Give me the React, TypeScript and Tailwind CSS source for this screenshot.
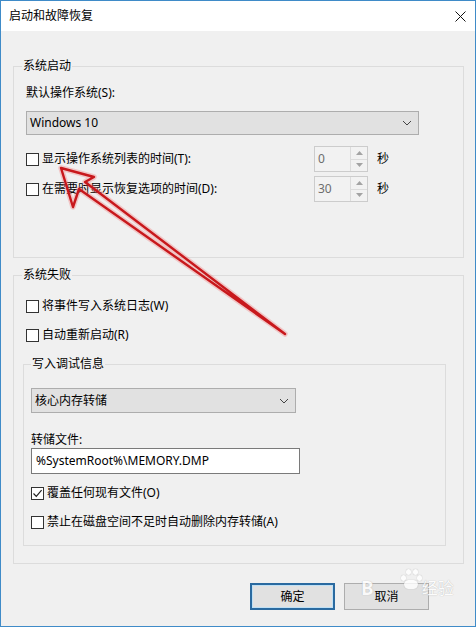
import React from "react";

function CheckBox({ checked = false }: { checked?: boolean }) {
  return (
    <span className="flex h-[13px] w-[13px] shrink-0 items-center justify-center border border-[#333333] bg-white">
      {checked && (
        <svg width="11" height="11" viewBox="0 0 11 11">
          <path d="M1.5 5.5 L4.3 8.3 L9.6 2.2" fill="none" stroke="#222" strokeWidth="1.2" />
        </svg>
      )}
    </span>
  );
}

function CheckRow({ label, checked = false }: { label: string; checked?: boolean }) {
  return (
    <div className="flex h-[16px] items-center gap-[3px]">
      <CheckBox checked={checked} />
      <span className="text-[12px] leading-[16px] text-black">{label}</span>
    </div>
  );
}

function Chevron() {
  return (
    <svg width="10" height="6" viewBox="0 0 10 6">
      <path d="M1 1 L5 5 L9 1" fill="none" stroke="#444" strokeWidth="1" />
    </svg>
  );
}

function ComboBox({ value, width }: { value: string; width: string }) {
  return (
    <div
      className={`flex h-[24px] items-center justify-between border border-[#adadad] bg-[#e1e1e1] pl-[3px] pr-[6px] ${width}`}
    >
      <span className="text-[12px] leading-[16px] text-black">{value}</span>
      <Chevron />
    </div>
  );
}

function SpinBox({ value }: { value: string }) {
  return (
    <div className="flex h-[26px] w-[54px] border border-[#cccccc] bg-[#f2f2f2]">
      <div className="flex flex-1 items-center pl-[3px] text-[12px] leading-[16px] text-[#6d6d6d]">{value}</div>
      <div className="flex w-[17px] flex-col border-l border-[#dcdcdc]">
        <div className="flex flex-1 items-center justify-center border-b border-[#dcdcdc]">
          <svg width="7" height="4" viewBox="0 0 7 4">
            <path d="M0 4 L3.5 0 L7 4 Z" fill="#a3a3a3" />
          </svg>
        </div>
        <div className="flex flex-1 items-center justify-center">
          <svg width="7" height="4" viewBox="0 0 7 4">
            <path d="M0 0 L3.5 4 L7 0 Z" fill="#a3a3a3" />
          </svg>
        </div>
      </div>
    </div>
  );
}

function SpinRow({ label, value }: { label: string; value: string }) {
  return (
    <div className="flex h-[26px] items-center">
      <div className="w-[292px] pl-[4px]">
        <CheckRow label={label} />
      </div>
      <SpinBox value={value} />
      <span className="ml-[9px] text-[12px] leading-[16px] text-black">秒</span>
    </div>
  );
}

export default function App() {
  return (
    <div className="relative flex h-[627px] w-[476px] flex-col overflow-hidden border border-[#3f8bc8] bg-[#f0f0f0] font-['Noto_Sans','Noto_Sans_CJK_SC',sans-serif] text-black">
      {/* title bar */}
      <div className="flex h-[30px] shrink-0 items-center justify-between bg-white pl-[8px] pr-[9px]">
        <span className="text-[12px] leading-[16px] text-black">启动和故障恢复</span>
        <svg width="11" height="11" viewBox="0 0 11 11">
          <path d="M0.5 0.5 L10.5 10.5 M10.5 0.5 L0.5 10.5" stroke="#111" strokeWidth="1" />
        </svg>
      </div>

      {/* dialog body */}
      <div className="flex flex-1 flex-col px-[12px] pt-[27px]">
        <fieldset className="h-[200px] w-[451px] border border-[#dcdcdc] pl-[8px]">
          <legend className="px-[1px] text-[12px] leading-[16px]">系统启动</legend>
          <div className="mt-[11px] pl-[4px] text-[12px] leading-[16px]">默认操作系统(S):</div>
          <div className="mt-[10px] pl-[4px]">
            <ComboBox value="Windows 10" width="w-[393px]" />
          </div>
          <div className="mt-[11px]">
            <SpinRow label="显示操作系统列表的时间(T):" value="0" />
          </div>
          <div className="mt-[4px]">
            <SpinRow label="在需要时显示恢复选项的时间(D):" value="30" />
          </div>
        </fieldset>

        <fieldset className="mt-[9px] h-[297px] w-[451px] border border-[#dcdcdc] pl-[8px]">
          <legend className="px-[1px] text-[12px] leading-[16px]">系统失败</legend>
          <div className="mt-[15px] pl-[4px]">
            <CheckRow label="将事件写入系统日志(W)" />
          </div>
          <div className="mt-[13px] pl-[4px]">
            <CheckRow label="自动重新启动(R)" />
          </div>

          <fieldset className="ml-[1px] mt-[13px] h-[190px] w-[423px] border border-[#dcdcdc] pl-[7px]">
            <legend className="px-[1px] text-[12px] leading-[16px]">写入调试信息</legend>
            <div className="mt-[16px]">
              <ComboBox value="核心内存转储" width="w-[265px] h-[25px]" />
            </div>
            <div className="mt-[19px] text-[12px] leading-[16px]">转储文件:</div>
            <div className="flex h-[26px] w-[269px] items-center border border-[#7a7a7a] bg-white pl-[4px] text-[12px] leading-[16px]">
              %SystemRoot%\MEMORY.DMP
            </div>
            <div className="mt-[11px]">
              <CheckRow label="覆盖任何现有文件(O)" checked />
            </div>
            <div className="mt-[13px]">
              <CheckRow label="禁止在磁盘空间不足时自动删除内存转储(A)" />
            </div>
          </fieldset>
        </fieldset>

        <div className="mt-[19px] flex justify-end gap-[9px] pr-[34px]">
          <button className="flex h-[27px] w-[85px] items-center justify-center border-2 border-[#2a6aa0] bg-[#e1e1e1] text-[12px] leading-[16px] text-black shadow-[inset_0_0_0_1px_#bfe0f5]">
            确定
          </button>
          <button className="flex h-[27px] w-[85px] items-center justify-center border border-[#adadad] bg-[#e1e1e1] text-[12px] leading-[16px] text-black">
            取消
          </button>
        </div>
      </div>

      {/* red annotation arrow */}
      <svg
        className="pointer-events-none absolute left-[-1px] top-[-1px]"
        width="476"
        height="627"
        viewBox="0 0 476 627"
      >
        <path
          d="M61 168 L94 177 L85 182 L285 334 L79 189 L73 207 Z"
          fill="none"
          stroke="rgba(240,120,120,0.35)"
          strokeWidth="5.5"
          strokeLinejoin="round"
        />
        <path
          d="M61 168 L94 177 L85 182 L285 334 L79 189 L73 207 Z"
          fill="none"
          stroke="#c8181c"
          strokeWidth="2.4"
          strokeLinejoin="round"
        />
      </svg>

      {/* site watermark */}
      <div className="pointer-events-none absolute left-[360px] top-[568px] flex items-end opacity-80">
        <span className="text-[19px] font-bold leading-[22px] text-white [text-shadow:0_0_1px_#9a9a9a]">B</span>
        <div className="relative ml-[26px] h-[30px] w-[22px]">
          <span className="absolute left-[6px] top-[0px] h-[6px] w-[5px] rounded-full bg-white shadow-[0_0_1px_#999]" />
          <span className="absolute left-[13px] top-[0px] h-[6px] w-[5px] rounded-full bg-white shadow-[0_0_1px_#999]" />
          <span className="absolute left-[1px] top-[6px] h-[6px] w-[5px] rounded-full bg-white shadow-[0_0_1px_#999]" />
          <span className="absolute left-[17px] top-[6px] h-[6px] w-[5px] rounded-full bg-white shadow-[0_0_1px_#999]" />
          <span className="absolute left-[4px] top-[11px] h-[9px] w-[14px] rounded-full bg-white shadow-[0_0_1px_#999]" />
        </div>
        <span className="text-[16px] leading-[22px] text-white [text-shadow:0_0_1px_#9a9a9a]">经验</span>
      </div>
    </div>
  );
}
